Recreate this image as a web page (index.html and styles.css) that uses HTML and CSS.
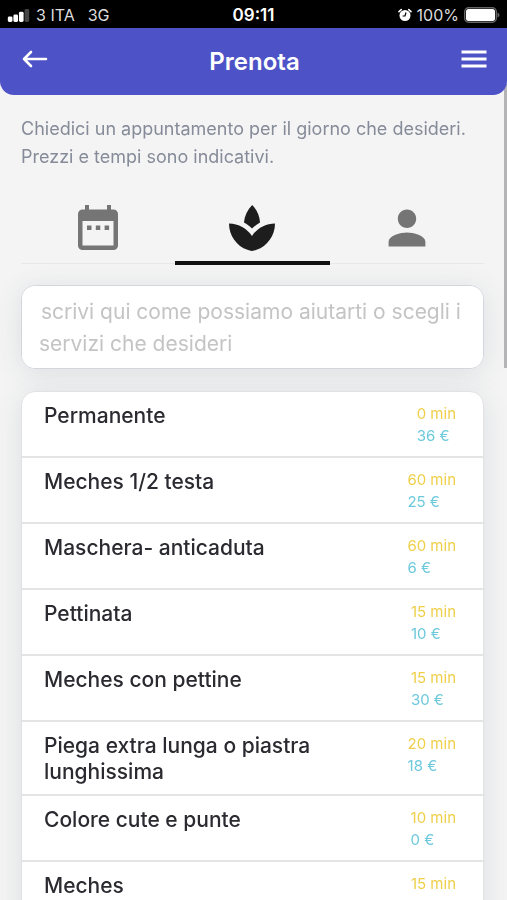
FILE: index.html
```html
<!DOCTYPE html>
<html lang="it">
<head>
  <meta charset="UTF-8">
  <meta name="viewport" content="width=device-width, initial-scale=1">
  <title>Prenota</title>
  <link rel="stylesheet" href="styles.css">
</head>

<body>
  <div class="app">
    <div class="status-bar">
      <div class="status-left">
        <svg class="signal" viewBox="0 0 23 14" aria-hidden="true">
          <rect x="0" y="8" width="5" height="6" rx="1.5" fill="#fff"/>
          <rect x="6" y="6" width="5" height="8" rx="1.5" fill="#fff"/>
          <rect x="12" y="3" width="5" height="11" rx="1.5" fill="#fff"/>
          <rect x="18" y="0" width="5" height="14" rx="1.5" fill="#444"/>
        </svg>
        <span>3 ITA</span>
        <span class="network">3G</span>
      </div>
      <span class="clock">09:11</span>
      <div class="status-right">
        <svg class="alarm" viewBox="0 0 14 14" aria-hidden="true">
          <circle cx="7" cy="7.5" r="5.5" fill="#fff"/>
          <path d="M1 3.6 3.2 1.6M13 3.6 10.8 1.6" stroke="#fff" stroke-width="1.6" stroke-linecap="round"/>
          <path d="M8 4.5 7 8H4.6" fill="none" stroke="#000" stroke-width="1.2"/>
        </svg>
        <span>100%</span>
        <svg class="battery" viewBox="0 0 36 16" aria-hidden="true">
          <rect x="0.7" y="0.7" width="31.6" height="14.6" rx="4" fill="none" stroke="#666" stroke-width="1.4"/>
          <rect x="2" y="2" width="29" height="12" rx="2.5" fill="#fff"/>
          <path d="M33.5 5.5v5q2-.6 2-2.5t-2-2.5" fill="#666"/>
        </svg>
      </div>
    </div>

    <header class="header">
      <button type="button" class="icon-btn" aria-label="Indietro">
        <svg width="26" height="18" viewBox="0 0 26 18" fill="none" stroke="#fff" stroke-width="2.6" stroke-linecap="round" stroke-linejoin="round">
          <path d="M24 9H2M9 2 2 9l7 7"/>
        </svg>
      </button>
      <h1>Prenota</h1>
      <button type="button" class="icon-btn" aria-label="Menu">
        <svg width="26" height="18" viewBox="0 0 26 18" stroke="#fff" stroke-width="2.8">
          <path d="M0.5 2H25.5M0.5 9H25.5M0.5 16H25.5"/>
        </svg>
      </button>
    </header>

    <main class="content">
      <p class="intro">Chiedici un appuntamento per il giorno che desideri. Prezzi e tempi sono indicativi.</p>

      <nav class="tabs">
        <button type="button" class="tab" aria-label="Data">
          <svg viewBox="0 0 42 46" width="42" height="46" fill="currentColor">
            <path fill-rule="evenodd" d="M8 0h4v4.500h18V0h4v4.500h2.500a4.500 4.500 0 0 1 4.500 4.500v31.500a4.500 4.500 0 0 1-4.500 4.500H5.500A4.500 4.500 0 0 1 1 40.500V9a4.500 4.500 0 0 1 4.500-4.500H8zM5.500 16v24.500h31V16z"/>
            <path d="M10 20.500h4.500V25H10zM18.800 20.500h4.500V25h-4.500zM27.600 20.500h4.500V25h-4.500z"/>
          </svg>
        </button>
        <button type="button" class="tab active" aria-label="Servizi">
          <svg viewBox="2 2 20 20" width="46" height="46" fill="currentColor">
            <path d="M15.490 9.630c-.180-2.790-1.310-5.510-3.430-7.630-2.140 2.140-3.320 4.860-3.550 7.630 1.280.680 2.460 1.560 3.490 2.630 1.030-1.060 2.210-1.940 3.490-2.630zM12 15.450C9.850 12.170 6.180 10 2 10c0 5.320 3.360 9.820 8.030 11.490.630.230 1.290.400 1.970.510.680-.120 1.330-.290 1.970-.510C18.640 19.820 22 15.320 22 10c-4.180 0-7.850 2.170-10 5.450z"/>
          </svg>
        </button>
        <button type="button" class="tab" aria-label="Operatore">
          <svg viewBox="2 2 20 20" width="46" height="46" fill="currentColor">
            <path d="M12 12c2.210 0 4-1.790 4-4s-1.790-4-4-4-4 1.790-4 4 1.790 4 4 4zm0 2c-2.670 0-8 1.340-8 4v2h16v-2c0-2.660-5.330-4-8-4z"/>
          </svg>
        </button>
      </nav>

      <textarea class="request" rows="2" aria-label="Richiesta" placeholder="&hairsp;scrivi qui come possiamo aiutarti o scegli i servizi che desideri"></textarea>

      <ul class="services">
        <li class="service">
          <h2>Permanente</h2>
          <div class="info"><span class="time">0 min</span><span class="price">36 €</span></div>
        </li>
        <li class="service">
          <h2>Meches 1/2 testa</h2>
          <div class="info"><span class="time">60 min</span><span class="price">25 €</span></div>
        </li>
        <li class="service">
          <h2>Maschera- anticaduta</h2>
          <div class="info"><span class="time">60 min</span><span class="price">6 €</span></div>
        </li>
        <li class="service">
          <h2>Pettinata</h2>
          <div class="info"><span class="time">15 min</span><span class="price">10 €</span></div>
        </li>
        <li class="service">
          <h2>Meches con pettine</h2>
          <div class="info"><span class="time">15 min</span><span class="price">30 €</span></div>
        </li>
        <li class="service">
          <h2>Piega extra lunga o piastra lunghissima</h2>
          <div class="info"><span class="time">20 min</span><span class="price">18 €</span></div>
        </li>
        <li class="service">
          <h2>Colore cute e punte</h2>
          <div class="info"><span class="time">10 min</span><span class="price">0 €</span></div>
        </li>
        <li class="service">
          <h2>Meches</h2>
          <div class="info"><span class="time">15 min</span></div>
        </li>
      </ul>
    </main>
    <div class="scroll-thumb"></div>
  </div>
</body>
</html>
```

FILE: styles.css
```css
* {
  box-sizing: border-box;
}

body {
  font-family: 'Inter', sans-serif;
  background-color: #f4f4f4;
  margin: 0;
}

.app {
  position: relative;
  height: 100vh;
  display: flex;
  flex-direction: column;
  overflow: hidden;
}

/* Status bar */
.status-bar {
  flex: none;
  display: grid;
  grid-template-columns: 1fr auto 1fr;
  align-items: center;
  height: 28px;
  padding: 2px 7px 0;
  background: #000;
  color: #ddd;
  font-size: 16px;
}

.status-left,
.status-right {
  display: flex;
  align-items: center;
  gap: 6px;
}

.status-right {
  justify-content: flex-end;
  gap: 5px;
}

.signal {
  width: 23px;
  height: 13px;
}

.network {
  margin-left: 7px;
}

.clock {
  color: #fff;
  font-size: 17px;
  font-weight: 600;
}

.alarm {
  width: 14px;
  height: 14px;
}

.battery {
  width: 36px;
  height: 16px;
}

/* Header */
.header {
  flex: none;
  display: flex;
  align-items: center;
  justify-content: space-between;
  height: 67px;
  padding: 0 20px 0 22px;
  background: #4e52c7;
  border-radius: 0 0 14px 14px;
  z-index: 1;
}

.header h1 {
  margin: 0;
  color: #fff;
  font-size: 24px;
  font-weight: 600;
}

.icon-btn {
  display: flex;
  padding: 0 0 5px;
  border: none;
  background: none;
  cursor: pointer;
}

/* Content */
.content {
  flex: 1;
  min-height: 0;
  padding: 20px 23px 0 21px;
  overflow-y: auto;
  scrollbar-width: none;
}

.intro {
  margin: 0;
  color: #858b98;
  font-size: 18px;
  line-height: 28px;
}

.tabs {
  display: flex;
  height: 93px;
  border-bottom: 1px solid #e8e8e8;
}

.tab {
  flex: 1;
  display: flex;
  align-items: center;
  justify-content: center;
  padding: 24px 0 0;
  border: none;
  border-bottom: 4px solid transparent;
  margin-bottom: -2px;
  background: none;
  color: #757575;
  cursor: pointer;
}

.tab.active {
  color: #1d1d1d;
  border-bottom-color: #111;
}

.request {
  display: block;
  width: 100%;
  height: 84px;
  margin-top: 21px;
  padding: 10px 17px;
  border: 1px solid #d3d6dc;
  border-radius: 14px;
  background: #fff;
  box-shadow: 0 4px 28px rgba(60, 70, 100, 0.12);
  color: #2b2b33;
  font-family: inherit;
  font-size: 21px;
  line-height: 32px;
  resize: none;
}

.request::placeholder {
  color: #c4c4c4;
  opacity: 1;
}

.services {
  list-style: none;
  margin: 22px 0 0;
  padding: 0;
  border: 1px solid #e2e2e4;
  border-radius: 14px 14px 0 0;
  background: #fff;
  box-shadow: 0 4px 28px rgba(60, 70, 100, 0.12);
}

.service {
  display: flex;
  justify-content: space-between;
  align-items: flex-start;
  gap: 20px;
  min-height: 66px;
  padding: 11px 27px 9px 22px;
  border-bottom: 2px solid #e4e4e5;
}

.service h2 {
  flex: 1;
  max-width: 300px;
  margin: 0;
  color: #2a2a30;
  font-size: 21px;
  font-weight: 500;
  line-height: 26px;
}

.info {
  display: flex;
  flex-direction: column;
  font-size: 15px;
  line-height: 22px;
}

.time {
  color: #efcf4a;
}

.price {
  color: #6cc9dc;
}

.scroll-thumb {
  position: absolute;
  top: 84px;
  right: 0;
  width: 3px;
  height: 284px;
  background: #b4b4b6;
}
```
